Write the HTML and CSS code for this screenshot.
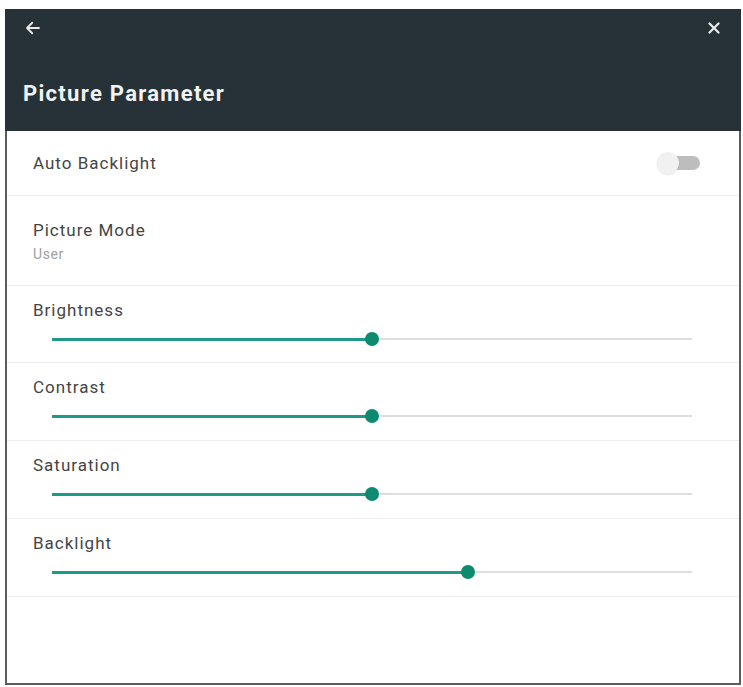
FILE: index.html
```html
<!DOCTYPE html>
<html lang="en">
<head>
    <meta charset="UTF-8">
    <meta name="viewport" content="width=device-width, initial-scale=1.0">
    <title>Picture Parameter</title>
    <link rel="stylesheet" href="styles.css">
</head>
<body>
    <div class="panel">
        <header class="header">
            <div class="toolbar">
                <svg class="icon" width="18" height="18" viewBox="0 0 24 24">
                    <path d="M20 12H5M11 5l-7 7 7 7" fill="none" stroke="#e8eaeb" stroke-width="2.4" stroke-linecap="round" stroke-linejoin="round"/>
                </svg>
                <svg class="icon" width="12" height="12" viewBox="0 0 12 12">
                    <path d="M1.5 1.5l9 9M10.5 1.5l-9 9" fill="none" stroke="#e8eaeb" stroke-width="2.2" stroke-linecap="round"/>
                </svg>
            </div>
            <h1>Picture Parameter</h1>
        </header>

        <ul class="settings">
            <li class="row row-switch">
                <span class="label">Auto Backlight</span>
                <span class="switch"><span class="switch-track"></span><span class="switch-thumb"></span></span>
            </li>
            <li class="row row-mode">
                <span class="label">Picture Mode</span>
                <span class="sub">User</span>
            </li>
            <li class="row row-slider first">
                <span class="label">Brightness</span>
                <div class="slider"><div class="fill" style="width: 50%"><span class="thumb"></span></div></div>
            </li>
            <li class="row row-slider">
                <span class="label">Contrast</span>
                <div class="slider"><div class="fill" style="width: 50%"><span class="thumb"></span></div></div>
            </li>
            <li class="row row-slider">
                <span class="label">Saturation</span>
                <div class="slider"><div class="fill" style="width: 50%"><span class="thumb"></span></div></div>
            </li>
            <li class="row row-slider">
                <span class="label">Backlight</span>
                <div class="slider"><div class="fill" style="width: 65%"><span class="thumb"></span></div></div>
            </li>
        </ul>
    </div>
</body>
</html>
```

FILE: styles.css
```css
body {
    margin: 0;
    background: #fff;
    font-family: Roboto, "Liberation Sans", sans-serif;
}
.panel {
    margin: 9px 0 0 5px;
    width: 736px;
    height: 676px;
    box-sizing: border-box;
    border: 2px solid #5c5c5c;
    border-top: none;
    display: flex;
    flex-direction: column;
}
.header {
    background: #263238;
    height: 122px;
    margin: 0 -2px;
    padding: 9px 21px 0 18px;
    box-sizing: border-box;
}
.toolbar {
    height: 20px;
    display: flex;
    justify-content: space-between;
    align-items: center;
}
.toolbar .icon:first-child {
    margin-left: 1px;
}
.header h1 {
    margin: 43px 0 0;
    color: #f2f3f4;
    font-size: 22px;
    font-weight: bold;
    letter-spacing: 1.3px;
    line-height: 26px;
}
.settings {
    list-style: none;
    margin: 0;
    padding: 0;
}
.row {
    border-bottom: 1px solid #eeeeee;
    padding: 0 0 0 26px;
    box-sizing: border-box;
}
.label {
    font-size: 17px;
    color: #454545;
    letter-spacing: 1px;
    line-height: 20px;
}
.row-switch {
    height: 65px;
    display: flex;
    align-items: center;
    justify-content: space-between;
    padding-right: 39px;
}
.switch {
    position: relative;
    width: 44px;
    height: 22px;
    display: flex;
    align-items: center;
    justify-content: flex-end;
}
.switch-track {
    width: 34px;
    height: 14px;
    border-radius: 7px;
    background: #bdbdbd;
}
.switch-thumb {
    position: absolute;
    left: 1px;
    top: 0;
    width: 22px;
    height: 22px;
    border-radius: 50%;
    background: #f1f1f1;
    box-shadow: 0 1px 2px rgba(0, 0, 0, 0.1);
}
.row-mode {
    height: 90px;
    display: flex;
    flex-direction: column;
    padding-top: 24px;
}
.sub {
    margin-top: 6px;
    font-size: 14px;
    letter-spacing: 0.6px;
    color: #a0a0a0;
}
.row-slider {
    height: 78px;
    padding-top: 14px;
}
.row-slider.first {
    height: 77px;
}
.slider {
    margin: 18px 47px 0 19px;
    height: 2px;
    background: #dedede;
}
.fill {
    position: relative;
    height: 3px;
    margin-top: -0.5px;
    background: #1e9a88;
}
.thumb {
    position: absolute;
    right: -7px;
    top: -5.5px;
    width: 14px;
    height: 14px;
    border-radius: 50%;
    background: #0d8a70;
}
```
